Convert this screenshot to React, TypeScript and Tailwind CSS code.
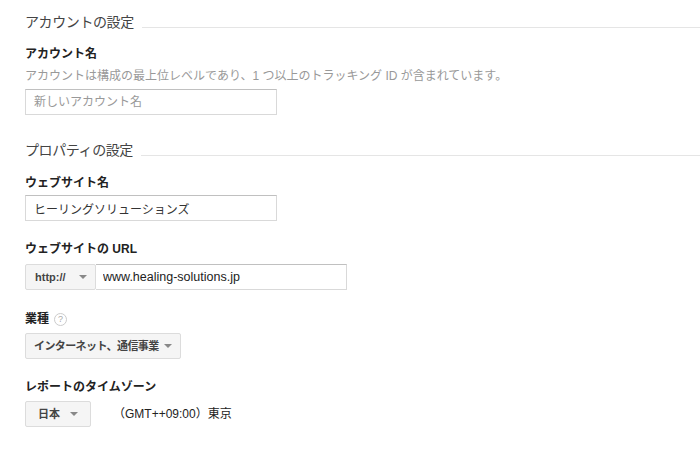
import { ReactNode } from "react"

const font = { fontFamily: '"Liberation Sans", Arial, "Noto Sans CJK JP", sans-serif' }

function SectionTitle({ children }: { children: ReactNode }) {
  return (
    <div className="flex items-center gap-[8px] pl-[25px]">
      <h2 className="text-[14px] leading-5 tracking-[-0.4px] text-[#444]">{children}</h2>
      <div className="mt-[10px] h-px flex-1 bg-[#e5e5e5]" />
    </div>
  )
}

function Label({ children }: { children: ReactNode }) {
  return <div className="text-[12px] font-bold leading-5 text-[#222]">{children}</div>
}

function Caret() {
  return <span className="inline-block h-0 w-0 shrink-0 border-x-[4px] border-t-[4px] border-x-transparent border-t-[#888]" />
}

function SelectButton({ label, className }: { label: string; className: string }) {
  return (
    <button
      className={`flex h-[26px] items-center justify-between whitespace-nowrap rounded-[2px] border border-[#dcdcdc] bg-[#f5f5f5] text-[11px] font-bold leading-none text-[#444] ${className}`}
    >
      <span>{label}</span>
      <Caret />
    </button>
  )
}

export default function App() {
  return (
    <div className="h-[449px] w-[700px] overflow-hidden bg-white" style={font}>
      <div className="pt-[12px]">
        <SectionTitle>アカウントの設定</SectionTitle>

        <div className="mt-[12px] pl-[25px]">
          <Label>アカウント名</Label>
          <p className="mt-[4px] text-[12px] leading-4 text-[#999]">
            アカウントは構成の最上位レベルであり、1 つ以上のトラッキング ID が含まれています。
          </p>
          <input
            className="mt-[5px] h-[26px] w-[252px] border border-[#d9d9d9] border-t-[#c0c0c0] px-[8px] text-[12px] text-[#333] placeholder:text-[#999] outline-none"
            placeholder="新しいアカウント名"
          />
        </div>

        <div className="mt-[25px]">
          <SectionTitle>プロパティの設定</SectionTitle>
        </div>

        <div className="mt-[13px] pl-[25px]">
          <Label>ウェブサイト名</Label>
          <input
            className="mt-[2px] h-[26px] w-[252px] border border-[#d9d9d9] border-t-[#c0c0c0] px-[8px] text-[12px] text-[#333] outline-none"
            defaultValue="ヒーリングソリューションズ"
          />
        </div>

        <div className="mt-[18px] pl-[25px]">
          <Label>ウェブサイトの URL</Label>
          <div className="mt-[5px] flex">
            <SelectButton label="http://" className="w-[71px] pl-[9px] pr-[8px]" />
            <input
              className="h-[26px] w-[251px] border border-l-0 border-[#d9d9d9] border-t-[#c0c0c0] px-[7px] text-[12.5px] text-[#222] outline-none"
              defaultValue="www.healing-solutions.jp"
            />
          </div>
        </div>

        <div className="mt-[19px] pl-[25px]">
          <div className="flex items-center gap-[5px]">
            <Label>業種</Label>
            <span className="flex h-[13px] w-[13px] items-center justify-center rounded-full border border-[#ccc] text-[9px] leading-none text-[#aaa]">
              ?
            </span>
          </div>
          <SelectButton
            label="インターネット、通信事業"
            className="mt-[4px] w-[156px] pl-[8px] pr-[8px] tracking-[-0.6px]"
          />
        </div>

        <div className="mt-[18px] pl-[25px]">
          <Label>レポートのタイムゾーン</Label>
          <div className="mt-[4px] flex items-center">
            <SelectButton label="日本" className="w-[66px] pl-[12px] pr-[12px]" />
            <span className="ml-[22px] text-[12px] text-[#222]">（GMT++09:00）東京</span>
          </div>
        </div>
      </div>
    </div>
  )
}
